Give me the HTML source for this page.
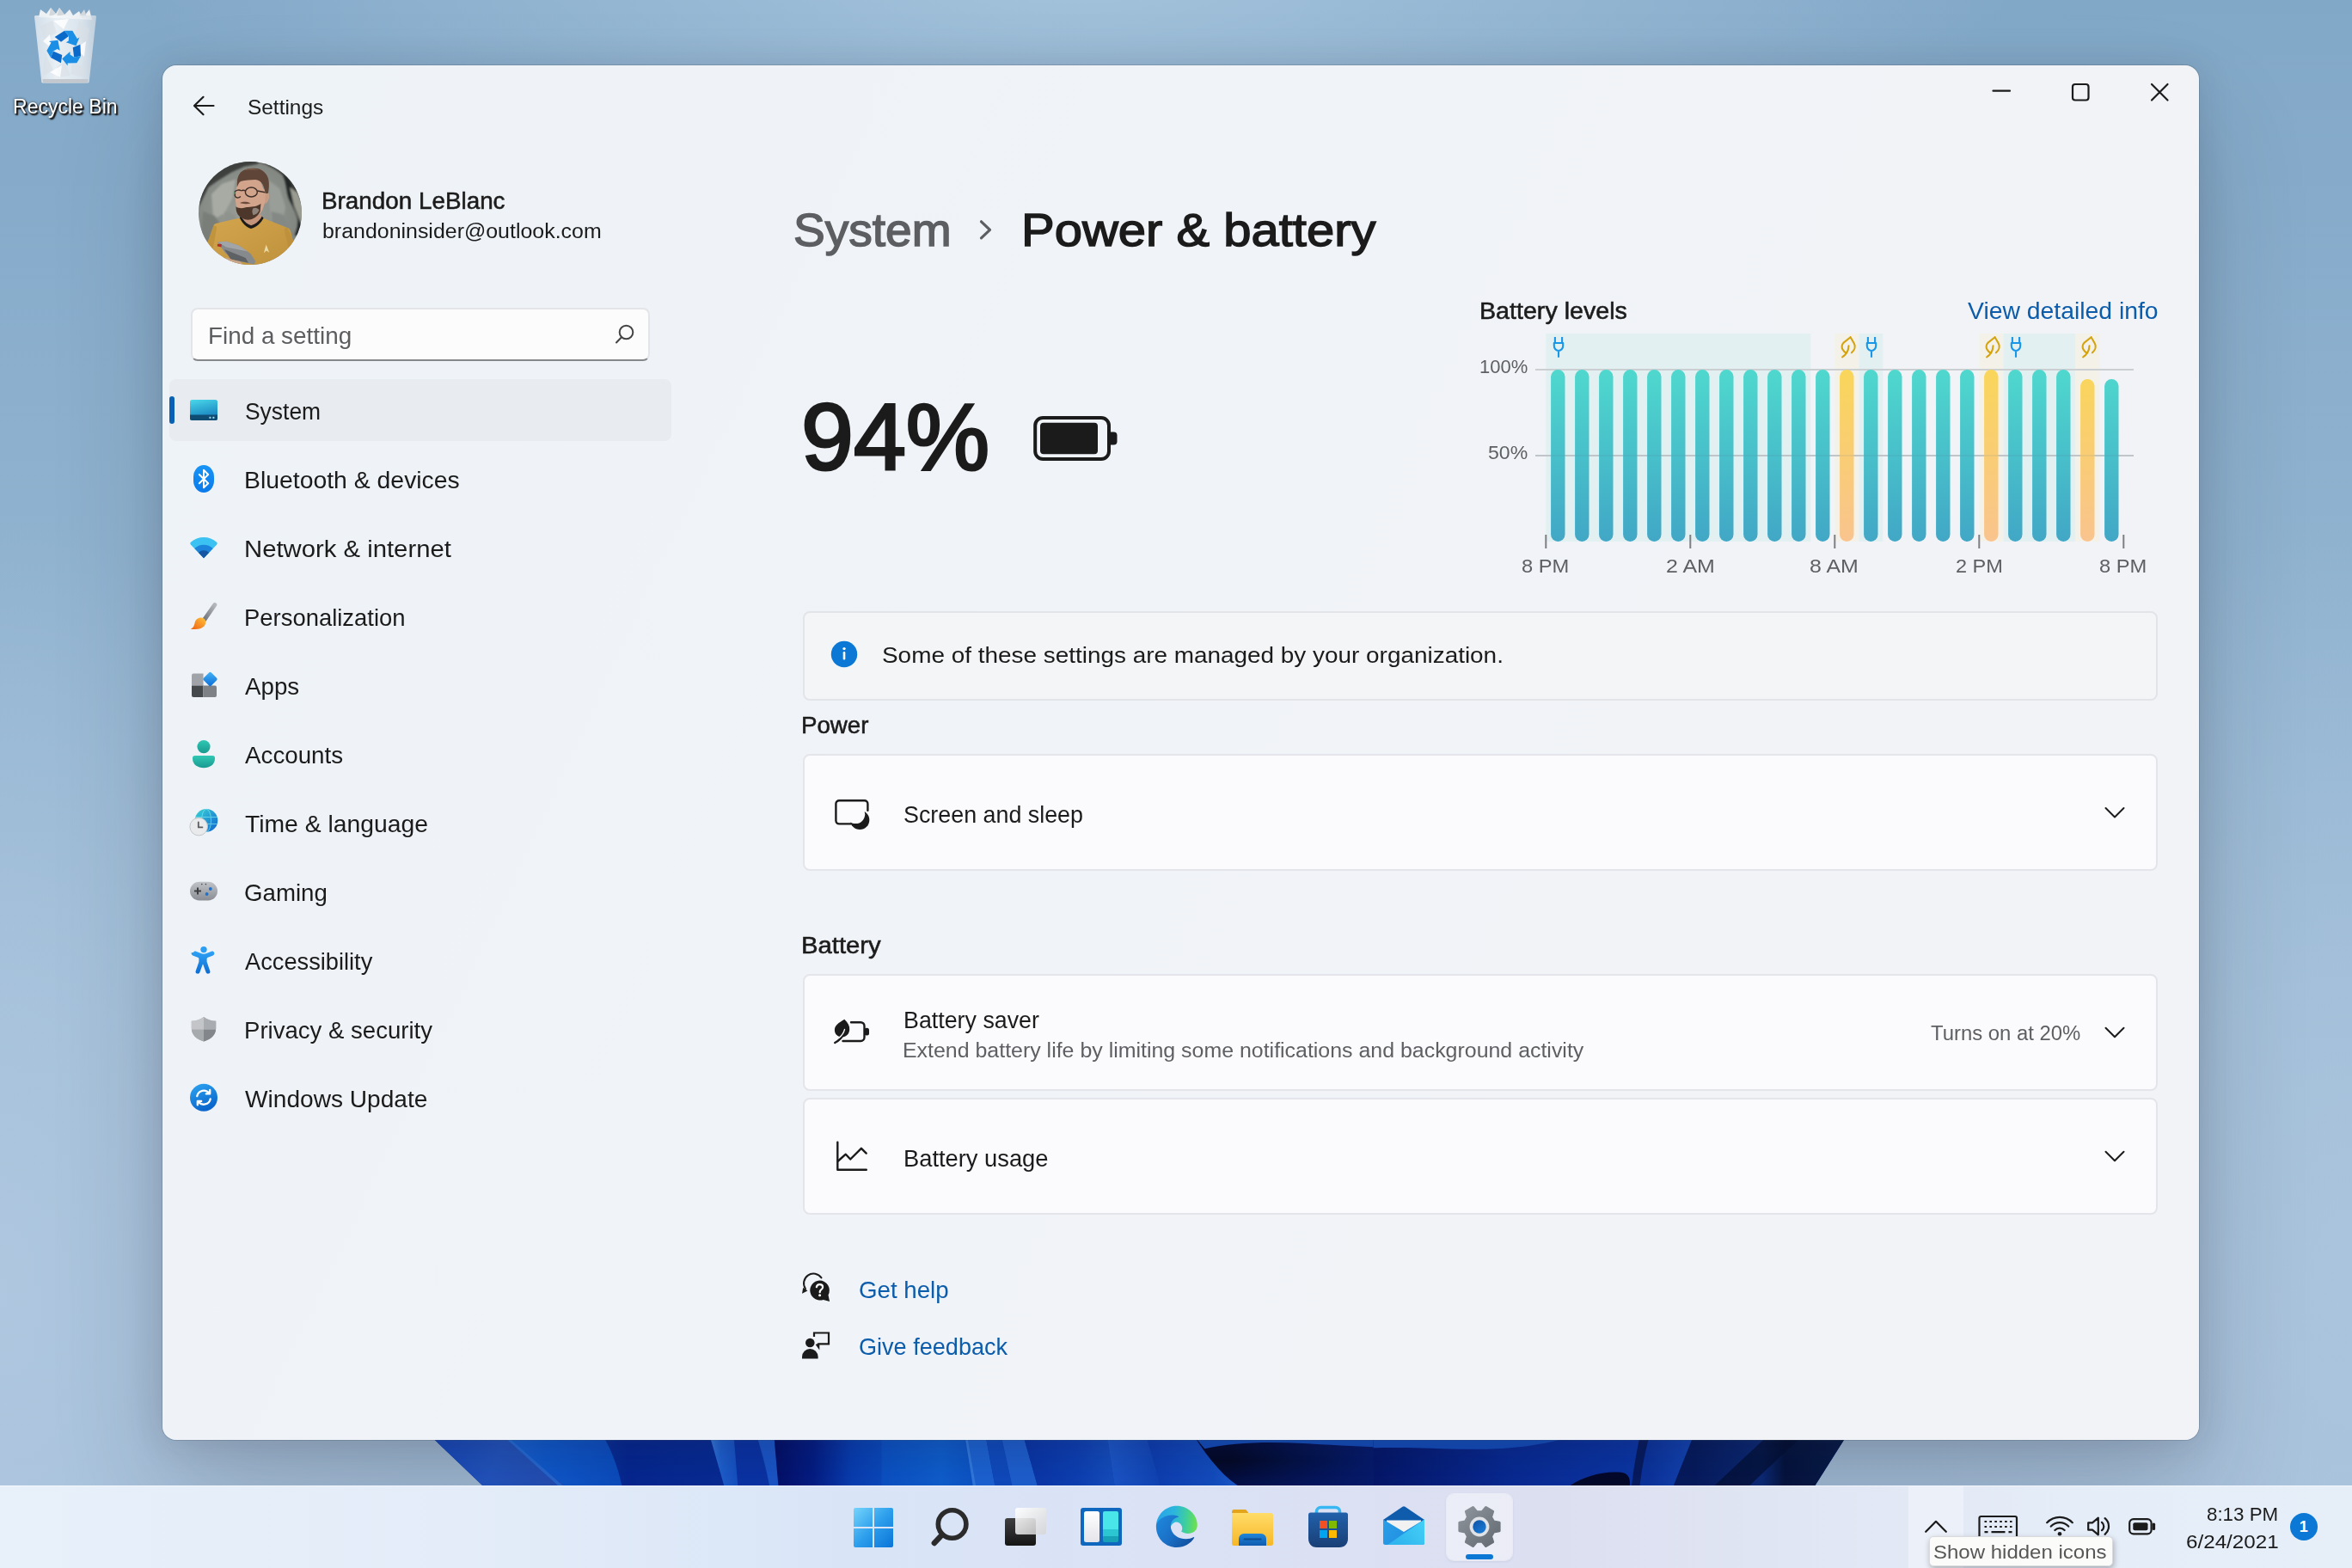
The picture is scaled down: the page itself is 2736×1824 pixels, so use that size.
<!DOCTYPE html>
<html lang="en">
<head>
<meta charset="utf-8">
<title>Settings - Power &amp; battery</title>
<style>
*{box-sizing:border-box;margin:0;padding:0}
html,body{width:2736px;height:1824px;overflow:hidden}
body{position:relative;font-family:"Liberation Sans",sans-serif;color:#1b1b1b;
background:
 radial-gradient(ellipse 1100px 420px at 1250px -60px, rgba(168,198,222,.95), rgba(168,198,222,0) 100%),
 radial-gradient(ellipse 500px 900px at 2736px 1500px, rgba(176,200,224,.65), rgba(176,200,224,0) 100%),
 radial-gradient(ellipse 500px 900px at 0px 1500px, rgba(176,200,224,.9), rgba(176,200,224,0) 100%),
 linear-gradient(180deg,#82a8c8 0%,#8fb2cf 35%,#9dbbd6 65%,#a6bfda 100%);}
.abs{position:absolute}
.t{position:absolute;white-space:nowrap;line-height:1;transform-origin:0 0;left:calc(var(--x)*1px);top:calc((var(--b) - var(--s)*0.845)*1px);font-size:calc(var(--s)*1px)}
.sb{-webkit-text-stroke:calc(var(--s)*0.02px) currentColor}
.sbh{-webkit-text-stroke:calc(var(--s)*0.028px) currentColor}
.sec{color:#5d5f62}
.lnk{color:#0b5cab}
svg{position:absolute;overflow:visible}
#win{left:189px;top:76px;width:2369px;height:1599px;border-radius:16px;
 background:linear-gradient(115deg,#eef3f7 0%,#f0f3f7 40%,#f1f3f7 70%,#f2f3f7 100%);
 box-shadow:0 0 0 1px rgba(70,85,100,.26),0 64px 128px rgba(25,30,40,.19),0 4px 42px rgba(25,30,40,.14)}
.card{position:absolute;left:933.500px;width:1576px;border:2px solid #e3e5ea;border-radius:8px;background:#fbfbfd}
#tb{left:0;top:1728px;width:2736px;height:96px;
 background:linear-gradient(90deg,#e8f0fa 0%,#e3ecf8 20%,#d9e5f7 36%,#dbe2f5 50%,#dcdff0 66%,#e1e7f4 78%,#e5edf8 88%,#e6eef8 100%);
 border-top:1px solid rgba(255,255,255,.55)}
#r_lab{left:14.74px;top:113px;transform:scaleX(0.9802)}
#t_settings{left:288.48px;top:113px;transform:scaleX(1.0176)}
#t_name{left:374.48px;top:220px;transform:scaleX(1.0120)}
#t_mail{left:375.44px;top:258px;transform:scaleX(1.0609)}
#t_find{left:242.48px;top:377px;transform:scaleX(1.0123)}
#n0{left:284.54px;top:465px;transform:scaleX(0.9607)}
#n1{left:283.94px;top:545px;transform:scaleX(1.0317)}
#n2{left:283.87px;top:625px;transform:scaleX(1.0647)}
#n3{left:284.01px;top:705px;transform:scaleX(0.9973)}
#n4{left:285.00px;top:785px;transform:scaleX(1.0081)}
#n5{left:285.00px;top:865px;transform:scaleX(1.0089)}
#n6{left:285.00px;top:945px;transform:scaleX(1.0291)}
#n7{left:284.49px;top:1025px;transform:scaleX(1.0053)}
#n8{left:285.00px;top:1105px;transform:scaleX(0.9900)}
#n9{left:284.00px;top:1185px;transform:scaleX(1.0023)}
#n10{left:285.00px;top:1265px;transform:scaleX(1.0217)}
#h_sys{left:922.94px;top:241px;transform:scaleX(1.0289)}
#h_pb{left:1188.16px;top:241px;transform:scaleX(1.0838)}
#h_pct{left:932.48px;top:454px;transform:scaleX(1.0048)}
#c_title{left:1720.92px;top:348px;transform:scaleX(1.0414)}
#c_link{left:2288.50px;top:348px;transform:scaleX(1.0304)}
#c_y1{left:1721.04px;top:415px;transform:scaleX(0.9649)}
#c_y2{left:1731.49px;top:515px;transform:scaleX(1.0114)}
#c_x0{left:1769.96px;top:647px;transform:scaleX(1.0392)}
#c_x1{left:1937.61px;top:647px;transform:scaleX(1.0940)}
#c_x2{left:2105.21px;top:647px;transform:scaleX(1.0940)}
#c_x3{left:2274.57px;top:647px;transform:scaleX(1.0314)}
#c_x4{left:2441.96px;top:647px;transform:scaleX(1.0392)}
#i_msg{left:1026.44px;top:749px;transform:scaleX(1.0612)}
#s_power{left:932.49px;top:830px;transform:scaleX(1.0066)}
#p_scr{left:1051.02px;top:934px;transform:scaleX(0.9764)}
#s_batt{left:932.37px;top:1086px;transform:scaleX(1.0647)}
#b_sav{left:1050.55px;top:1173px;transform:scaleX(0.9750)}
#b_desc{left:1050.38px;top:1211px;transform:scaleX(1.0604)}
#b_turn{left:2245.50px;top:1191px;transform:scaleX(1.0158)}
#b_use{left:1050.51px;top:1334px;transform:scaleX(0.9928)}
#l_help{left:998.99px;top:1487px;transform:scaleX(1.0069)}
#l_feed{left:999.02px;top:1553px;transform:scaleX(0.9846)}
#y_time{left:2567.01px;top:1751px;transform:scaleX(0.9878)}
#y_date{left:2542.93px;top:1783px;transform:scaleX(1.0707)}
#y_tip{left:2248.93px;top:1795px;transform:scaleX(1.0722)}
</style>
</head>
<body>
<!-- ===== desktop ===== -->
<div id="desk" class="abs" style="left:0;top:0;width:2736px;height:1824px">
<!-- recycle bin -->
<svg style="left:36px;top:4px" width="82" height="98" viewBox="36 4 82 98">
<defs><linearGradient id="rb_b" x1="40" y1="0" x2="112" y2="0" gradientUnits="userSpaceOnUse"><stop offset="0" stop-color="#e2e9f0" stop-opacity=".82"/><stop offset=".35" stop-color="#f6f9fb" stop-opacity=".88"/><stop offset=".75" stop-color="#eaeff3" stop-opacity=".84"/><stop offset="1" stop-color="#d0d9e2" stop-opacity=".8"/></linearGradient></defs>
<path d="M45 20l2-9 7 5 5-7 6 7 4-7 6 8 6-6 4 7 7-5 4 8 8-10 3 12z" fill="#eef1f4"/>
<path d="M59 9l6 7-8 4zM69 9l6 8-9 2zM98 11l3 9-9-1z" fill="#d3d8dd"/>
<path d="M40 19.500c0-1 .8-1.500 1.800-1.500h68.400c1 0 1.800.5 1.800 1.500l-8.300 75.500c-.1 1-.8 1.500-1.700 1.500H50c-.9 0-1.600-.5-1.700-1.500z" fill="url(#rb_b)"/>
<path d="M49.300 92h53.400l-.5 3c-.1 1-.8 1.500-1.700 1.500H51.500c-.9 0-1.600-.5-1.700-1.500z" fill="#c2c8ce"/>
<g fill="#d9dee3" opacity=".55"><path d="M47 30l14-6 5 14-15 8zM92 24l12 10-4 18-12-12zM52 60l10 22-12 6zM84 74l16 4-2 12-16-4zM66 78l10-6 6 16-14 2z"/></g>
<g fill="#ffffff" opacity=".8"><path d="M62 24l18-2-6 12zM50 48l8-8 2 16zM88 56l12-8-2 18zM58 84l14-8-2 14z"/></g>
<g transform="translate(76 56)">
<g id="rarrow"><path d="M-12.300-13L-1-20.200L4-14L-5-7.200z" fill="#0a69c9"/><path d="M-1-20.200H8.300L13.800-11l2.600-1.600L12.400-2.800L0.800-6.800l3-1.800L4-14z" fill="#1b8fe6"/></g>
<use href="#rarrow" transform="rotate(120)"/><use href="#rarrow" transform="rotate(240)"/>
</g></svg>
<span class="t" id="r_lab" style="--x:16.700;--b:131.500;--s:23.500;--w:118.600;color:#fff;text-shadow:1.500px 1.500px 2px rgba(0,0,0,.95),0 0 3px rgba(0,0,0,.7),2px 2px 1px rgba(60,30,0,.55)">Recycle Bin</span>

</div>
<!-- wallpaper bloom (peeks out below the window) -->
<svg style="left:480px;top:1660px" width="1700" height="70" viewBox="480 1660 1700 70">
<defs>
<clipPath id="blc"><path d="M490 1660L561.200 1728H2111.500L2154.500 1660z"/></clipPath>
<linearGradient id="b_a" x1="100" y1="20" x2="700" y2="242" gradientUnits="userSpaceOnUse"><stop offset="0" stop-color="#1548c2"/><stop offset=".5" stop-color="#2257c8"/><stop offset="1" stop-color="#2450bc"/></linearGradient>
<linearGradient id="b_b" x1="460" y1="0" x2="1020" y2="0" gradientUnits="userSpaceOnUse"><stop offset="0" stop-color="#1866de"/><stop offset=".35" stop-color="#0e5cd8"/><stop offset="1" stop-color="#0a4fcb"/></linearGradient>
<linearGradient id="b_c" x1="930" y1="0" x2="1520" y2="0" gradientUnits="userSpaceOnUse"><stop offset="0" stop-color="#06309f"/><stop offset=".2" stop-color="#04279a"/><stop offset="1" stop-color="#052c9e"/></linearGradient>
<linearGradient id="b_d" x1="1450" y1="0" x2="1590" y2="0" gradientUnits="userSpaceOnUse"><stop offset="0" stop-color="#3a82ee"/><stop offset=".4" stop-color="#1e64dc"/><stop offset="1" stop-color="#1454d0"/></linearGradient>
<linearGradient id="b_g" x1="1765" y1="0" x2="2400" y2="0" gradientUnits="userSpaceOnUse"><stop offset="0" stop-color="#010d6c"/><stop offset=".3" stop-color="#021c8c"/><stop offset=".6" stop-color="#0640be"/><stop offset="1" stop-color="#0a55d2"/></linearGradient>
<linearGradient id="b_g2" x1="-60" y1="0" x2="390" y2="0" gradientUnits="userSpaceOnUse"><stop offset="0" stop-color="#0a55d2"/><stop offset=".65" stop-color="#0d63dc"/><stop offset="1" stop-color="#0b58d4"/></linearGradient><linearGradient id="b_nx" x1="1650" y1="0" x2="2352" y2="0" gradientUnits="userSpaceOnUse"><stop offset="0" stop-color="#041a74" stop-opacity="0"/><stop offset="1" stop-color="#041a74" stop-opacity="1"/></linearGradient><linearGradient id="b_k" x1="630" y1="0" x2="1075" y2="0" gradientUnits="userSpaceOnUse"><stop offset="0" stop-color="#0836b2"/><stop offset=".6" stop-color="#0c42c0"/><stop offset="1" stop-color="#1452cc"/></linearGradient>
<linearGradient id="b_l" x1="1040" y1="0" x2="1300" y2="0" gradientUnits="userSpaceOnUse"><stop offset="0" stop-color="#1c5cd8"/><stop offset="1" stop-color="#0f46c2"/></linearGradient>
<linearGradient id="b_m" x1="1225" y1="0" x2="1700" y2="0" gradientUnits="userSpaceOnUse"><stop offset="0" stop-color="#0b3ebc"/><stop offset=".7" stop-color="#1250cc"/><stop offset="1" stop-color="#1e62dc"/></linearGradient>
<linearGradient id="b_n" x1="0" y1="20" x2="0" y2="242" gradientUnits="userSpaceOnUse"><stop offset="0" stop-color="#010a3c"/><stop offset=".45" stop-color="#000726"/><stop offset="1" stop-color="#020f4c"/></linearGradient>
<linearGradient id="b_p" x1="0" y1="0" x2="1300" y2="0" gradientUnits="userSpaceOnUse"><stop offset="0" stop-color="#031670"/><stop offset=".5" stop-color="#062a9c"/><stop offset="1" stop-color="#0a38b2"/></linearGradient>
<linearGradient id="b_q" x1="1330" y1="0" x2="1560" y2="0" gradientUnits="userSpaceOnUse"><stop offset="0" stop-color="#0a34a6"/><stop offset="1" stop-color="#1248c0"/></linearGradient>
<linearGradient id="b_r" x1="1560" y1="0" x2="2290" y2="0" gradientUnits="userSpaceOnUse"><stop offset="0" stop-color="#041a62"/><stop offset=".45" stop-color="#0a2a7c"/><stop offset=".6" stop-color="#03123f"/><stop offset="1" stop-color="#061a4a"/></linearGradient>
</defs>
<g clip-path="url(#blc)">
<rect x="480" y="1660" width="1700" height="70" fill="#0a3ab2"/>
<g transform="translate(480 1670) scale(.2381)">
<path d="M0-40H400L790 260H0z" fill="url(#b_a)"/>
<path d="M390-40L760 260H1040C1020 150 980 60 910-40z" fill="url(#b_b)"/>
<path d="M396-40l16 0 340 300h-24z" fill="#2a78e8" opacity=".7"/>
<path d="M905-40c60 90 100 190 120 300H1540L1440-40z" fill="url(#b_c)"/>
<path d="M1440-40L1526 260h70L1566-40z" fill="url(#b_d)"/>
<path d="M1566-40l24 300h156L1670-40z" fill="#0834b0"/>
<path d="M1670-40c30 100 60 200 76 300h46L1762-40z" fill="#1a5ad6"/>
<path d="M1762-40l26 300H2400V-40z" fill="url(#b_g)"/>
</g>
<g transform="translate(1040 1670) scale(.2381)">
<path d="M-60-40H345L392 260H-60z" fill="url(#b_g2)"/>
<path d="M340-40l48 300h108L440-40z" fill="#1c68e2"/>
<path d="M340-40l48 300h14L350-40z" fill="#3a86f0" opacity=".8"/>
<path d="M440-40l56 300h84L515-40z" fill="#0e4ecb"/>
<path d="M515-40l65 300h125L620-40z" fill="#1e64de"/>
<path d="M620-40l85 300h375L1035-40z" fill="url(#b_k)"/>
<path d="M1035-40l45 300h225C1280 160 1250 60 1220-40z" fill="url(#b_l)"/>
<path d="M1220-40c30 100 60 200 85 300h400C1600 200 1520 90 1440-40z" fill="url(#b_m)"/>
<path d="M1440-40c80 130 160 240 265 300H2400V-40z" fill="url(#b_n)"/>
<path d="M1440-40H2400V260H1705C1600 200 1520 90 1440-40z" fill="url(#b_nx)"/><path d="M1440-40c24 36 50 74 78 104 130-30 300-36 480-26 150 8 290 16 410 20V-40z" fill="#1250c8"/>

</g>
<g transform="translate(1600 1670) scale(.2381)">
<path d="M-10-40H1320L1290 260H-10z" fill="url(#b_p)"/>
<path d="M-10-40H1060C900 40 700 70 420 66 250 62 100 56-10 60z" fill="#1250c8"/>
<path d="M930 260c60-50 170-90 270-80 40 4 50 40 40 80z" fill="#00062a"/>
<path d="M1300-40c-20 100-40 200-50 300h200L1570-40z" fill="url(#b_q)"/>
<path d="M1300-40c-20 100-40 200-50 300h40c10-100 30-200 60-300z" fill="#041454" opacity=".8"/>
<path d="M1570-40L1450 260H2400V-40z" fill="url(#b_r)"/>
<path d="M1960-40L1640 260h170L2130-40z" fill="#020d33" opacity=".7"/>
</g>
</g></svg>

<!-- ===== window ===== -->
<div id="win" class="abs"></div>
<!-- title bar -->
<svg style="left:220px;top:108px" width="34" height="30" viewBox="220 108 34 30" fill="none" stroke="#1b1b1b" stroke-width="2.2" stroke-linecap="round" stroke-linejoin="round"><path d="M248.5 123H226.5M236.5 112.8L226 123l10.5 10.2"/></svg>
<span class="t" id="t_settings" style="--x:289.5;--b:133.2;--s:24;--w:86.5">Settings</span>
<svg style="left:2300px;top:90px" width="240" height="36" viewBox="2300 90 240 36" fill="none" stroke="#1b1b1b" stroke-width="2.2" stroke-linecap="round"><path d="M2318.5 105.7h19.5"/><rect x="2411" y="98" width="18.5" height="18.5" rx="3"/><path d="M2503 98l18.5 18.5M2521.5 98L2503 116.5"/></svg>
<!-- profile -->
<svg style="left:231px;top:188px" width="120" height="120" viewBox="231 188 120 120">
<defs><clipPath id="avc"><circle cx="291" cy="248" r="60"/></clipPath>
<linearGradient id="avsh" x1="0" y1="0" x2="1" y2="1"><stop offset="0" stop-color="#d3a64e"/><stop offset="1" stop-color="#bd8f3a"/></linearGradient>
<radialGradient id="avrk" cx=".45" cy=".5" r=".6"><stop offset="0" stop-color="#9a9e98"/><stop offset="1" stop-color="#7d817c"/></radialGradient>
<filter id="avbl" x="-20%" y="-20%" width="140%" height="140%"><feGaussianBlur stdDeviation="14"/></filter></defs>
<g clip-path="url(#avc)"><g transform="translate(226 183) scale(.08292)">
<rect x="0" y="0" width="1568" height="1568" fill="url(#avrk)"/>
<g filter="url(#avbl)">
<path d="M0 0H1000L880 95 700 130 520 210 330 330 200 420 60 700 0 900z" fill="#3d413e"/>
<path d="M880 60l120 40 130 70 110 80 60 110 20 140 60 130 100 150 40 180-60 160 110 60V0H880z" fill="#3a3d3a"/>
<path d="M1230 230c50 90 60 200 80 300 20 90 110 200 140 330 10 80-10 160-40 230l80 30c40-110 40-260-20-380-40-100-80-200-100-320-20-90-70-150-140-190z" fill="#242725"/>
<path d="M1340 420l110 80 90 220-20 260-120-300z" fill="#9a9c92"/>
<path d="M240 520l150-150 190-60-40 260-120 220-150 80z" fill="#a7aba4"/>
<path d="M120 760l170 60 120 200-140 160-190 60z" fill="#7a7e79"/>
<path d="M1040 320l160 120 80 260-60 280-140-60-30-300z" fill="#9a9e99"/>
<path d="M1080 760l160 40 120 200-60 160-200-120z" fill="#858985"/>
<path d="M420 760l140 40 60 130-180 60z" fill="#8f938d"/>
</g>
<path d="M190 1185L268 965c8-22 22-32 44-38l300-72 170 30 190-30 330 130c30 12 42 28 50 52l40 150 50 420H120z" fill="url(#avsh)"/>
<path d="M268 965c30-8 50 4 46 30l-60 330-64-140z" fill="#b88a36" opacity=".6"/>
<path d="M1302 985c-28-4-44 12-38 40l70 300 60-150z" fill="#b88a36" opacity=".55"/>
<path d="M636 845l20-20 140 60 150-60 26 24c-30 70-100 130-176 152-70-24-130-80-160-156z" fill="#1e1c1b"/>
<path d="M668 800l130 40 140-40 10 30c-30 60-90 110-150 126-56-18-106-60-136-122z" fill="#c4947b"/>
<path d="M598 330c20-40 300-60 330 0l40 110 50 30c26 10 34 60 26 110-8 40-30 70-56 64l-30 90c-30 70-110 130-190 130-90 0-160-60-176-150l-16-130z" fill="#d2a48b"/>
<path d="M1000 470c30-4 46 40 40 100-6 46-26 76-50 74z" fill="#c99a82"/>
<path d="M584 690c40 30 100 30 150 10 60-10 130 0 200-50l-10 110c-30 70-100 116-170 116-80 0-150-50-166-130z" fill="#4d372b"/>
<path d="M640 640c40-22 110-22 150 4-40 12-110 14-150-4z" fill="#6a4a3c"/>
<path d="M820 720c30-20 70-10 90 20-10 40-50 70-84 70-16-30-16-60-6-90z" fill="#9a8f88" opacity=".85"/>
<path d="M600 420c-6-80 6-160 50-210 50-50 140-66 230-52 80 14 140 70 160 150 14 60 8 150-6 200l-36 0c-10-50-20-90-40-130-20-40-60-60-100-64-70 0-140 10-200 20-30 10-44 50-58 86z" fill="#5f4537"/>
<path d="M700 180c60-30 150-30 210 0-60-6-150 0-210 0z" fill="#7a5a48"/>
<g fill="none" stroke="#3e2f29" stroke-width="17"><ellipse cx="800" cy="488" rx="84" ry="66"/><path d="M716 470c-20-10-40-10-56 0"/><path d="M660 470c-30-20-70-10-90 10v60c10 30 50 40 80 10"/><path d="M884 470l110 22"/></g>
<path d="M568 480v40" stroke="#4fbf7a" stroke-width="14" fill="none" opacity=".7"/>
<path d="M330 1190l120-10 180 60 160 110 70 110-20 40-260-50-150-110z" fill="#878a8d"/>
<path d="M330 1190l120-10 180 60 120 80-300-60z" fill="#a2a5a8"/>
<path d="M420 1290l300 120 40 70-250-50z" fill="#5f6265"/>
<path d="M325 1215l60 4-6 40-56-10z" fill="#b0302c"/>
<path d="M440 1400c40 20 110 50 200 60l40 40-200-20z" fill="#caa58c"/>
<path d="M1008 1225l44 110-40-26-36 34z" fill="#eadba6"/>
</g></g></svg>
<span class="t sb" id="t_name" style="--x:376.5;--b:243.4;--s:27.5;--w:211.5">Brandon LeBlanc</span>
<span class="t" id="t_mail" style="--x:376.5;--b:277;--s:23.5;--w:322.5">brandoninsider@outlook.com</span>
<!-- search box -->
<div class="abs" style="left:222px;top:358px;width:534px;height:62px;border-radius:8px;background:#fcfcfd;border:2px solid #e3e5e8;border-bottom:2px solid #868789"></div>
<span class="t" id="t_find" style="--x:244.5;--b:400;--s:27.5;--w:164;color:#5c5d5f">Find a setting</span>
<svg style="left:714px;top:376px" width="26" height="26" viewBox="714 376 26 26" fill="none" stroke="#444" stroke-width="2" stroke-linecap="round"><circle cx="728.500" cy="386.500" r="7.800"/><path d="M722.800 392.500L717 398.500"/></svg>
<!-- navigation -->
<div class="abs" style="left:197px;top:441px;width:584px;height:72px;border-radius:8px;background:#e8ebef"></div>
<div class="abs" style="left:197px;top:461px;width:6px;height:32px;border-radius:3px;background:#0a60b4"></div>
<svg style="left:215px;top:455px" width="44" height="850" viewBox="215 455 44 850">
<defs>
<linearGradient id="g_sys" x1="0" y1="0" x2="0.300" y2="1"><stop offset="0" stop-color="#4ad8ea"/><stop offset="1" stop-color="#1680be"/></linearGradient>
<linearGradient id="g_bt" x1="0" y1="0" x2="0" y2="1"><stop offset="0" stop-color="#1794f6"/><stop offset="1" stop-color="#0a7aea"/></linearGradient>
<linearGradient id="g_br" x1="1" y1="0" x2="0" y2="1"><stop offset="0" stop-color="#ffc23a"/><stop offset="1" stop-color="#ee5f12"/></linearGradient>
<linearGradient id="g_hd" x1="1" y1="0" x2="0" y2="1"><stop offset="0" stop-color="#b4b8bd"/><stop offset="1" stop-color="#74787e"/></linearGradient>
<linearGradient id="g_dm" x1="0" y1="0" x2="1" y2="1"><stop offset="0" stop-color="#45b4f6"/><stop offset="1" stop-color="#0a6cd8"/></linearGradient>
<linearGradient id="g_ac" x1="0" y1="0" x2="0" y2="1"><stop offset="0" stop-color="#30c8b4"/><stop offset="1" stop-color="#189a90"/></linearGradient>
<linearGradient id="g_gl" x1="0" y1="0" x2="1" y2="1"><stop offset="0" stop-color="#3ad6d6"/><stop offset="1" stop-color="#0f62d0"/></linearGradient>
<linearGradient id="g_gm" x1="0" y1="0" x2="0" y2="1"><stop offset="0" stop-color="#c0c4c9"/><stop offset="1" stop-color="#8a8e94"/></linearGradient>
<linearGradient id="g_ax" x1="0" y1="0" x2="0" y2="1"><stop offset="0" stop-color="#2ea2f6"/><stop offset="1" stop-color="#0d6cd2"/></linearGradient>
<linearGradient id="g_wu" x1="0" y1="0" x2="0.400" y2="1"><stop offset="0" stop-color="#2ea6f2"/><stop offset="1" stop-color="#0a66cc"/></linearGradient>
</defs>
<!-- system -->
<rect x="221" y="465" width="32" height="24" rx="2.500" fill="url(#g_sys)"/>
<path d="M221 482.500h32v4a2.500 2.500 0 0 1-2.500 2.500h-27a2.500 2.500 0 0 1-2.500-2.500z" fill="#0e4c74"/>
<rect x="243.400" y="484.800" width="2" height="2" fill="#9fdcee"/><rect x="247.400" y="484.800" width="2" height="2" fill="#9fdcee"/>
<!-- bluetooth -->
<rect x="225" y="541" width="24" height="32" rx="12" ry="14" fill="url(#g_bt)"/>
<path d="M231.800 552L242.200 562.200L237 567.200V546.800L242.200 552L231.800 562.200" fill="none" stroke="#fff" stroke-width="2" stroke-linejoin="round" stroke-linecap="round"/>
<!-- network -->
<path d="M237 649.200L221.800 633.400a1.800 1.800 0 0 1 .1-2.600A22.600 22.600 0 0 1 252.100 630.800a1.800 1.800 0 0 1 .1 2.600z" fill="#3cc2f2"/>
<path d="M237 649.200L226.300 638A15.500 15.500 0 0 1 247.700 638z" fill="#1c84da"/>
<path d="M237 649.200L230.900 642.800A8.800 8.800 0 0 1 243.100 642.800z" fill="#1555a2"/>
<!-- personalization -->
<path d="M249.800 703.600L238 720.500" stroke="url(#g_hd)" stroke-width="5" stroke-linecap="round" fill="none"/>
<path d="M239.200 722.600c1 4.400-3.400 9-9.400 9.200-3 .4-6.200.4-8 .1 3-1.800 4.200-4 4.700-7 .6-4 3.800-6.300 7.200-6.300 2.600 0 4.900 1.600 5.500 4z" fill="url(#g_br)"/>
<!-- apps -->
<path d="M223 785.500a2 2 0 0 1 2-2h11.500v14H223z" fill="#a0a3a7"/>
<path d="M223 797.500h13.500V811H225a2 2 0 0 1-2-2z" fill="#46494c"/>
<path d="M236.500 797.500H250a2 2 0 0 1 2 2V809a2 2 0 0 1-2 2h-13.500z" fill="#7e8186"/>
<rect x="238.300" y="783.800" width="12.400" height="12.400" rx="1.600" transform="rotate(45 244.500 790)" fill="url(#g_dm)"/>
<!-- accounts -->
<circle cx="237" cy="868.600" r="7.600" fill="url(#g_ac)"/>
<path d="M224 881.800a2.800 2.800 0 0 1 2.800-2.800h20.400a2.800 2.800 0 0 1 2.800 2.800v.8c0 7-6 10.600-13 10.600s-13-3.600-13-10.600z" fill="url(#g_ac)"/>
<!-- time & language -->
<circle cx="240" cy="954.400" r="13.300" fill="url(#g_gl)"/>
<g fill="none" stroke="#7fe6ee" stroke-width="1" opacity=".7"><ellipse cx="240" cy="954.400" rx="5.500" ry="13.300"/><path d="M227 950.500h26M227.500 958.500h25"/></g>
<circle cx="231.200" cy="961.600" r="10.300" fill="#e9eaeb" stroke="#c4c6c9" stroke-width="1"/>
<path d="M230.800 956.400v6h4.600" fill="none" stroke="#5a5c5f" stroke-width="1.800" stroke-linecap="round" stroke-linejoin="round"/>
<!-- gaming -->
<rect x="221" y="1025.800" width="32" height="21.600" rx="10.800" fill="url(#g_gm)"/>
<path d="M226 1036.500h8M230 1032.500v8" stroke="#3c3e41" stroke-width="2" fill="none"/>
<circle cx="244.800" cy="1034" r="1.900" fill="#1a73d4"/><circle cx="240.600" cy="1040" r="1.900" fill="#1a73d4"/>
<circle cx="234.800" cy="1028.600" r=".8" fill="#444"/><circle cx="239.400" cy="1028.600" r=".8" fill="#444"/>
<!-- accessibility -->
<circle cx="237" cy="1104.600" r="3.700" fill="#2b9ef4"/>
<path d="M224.800 1108.100c.5-1.300 2-1.900 3.300-1.400l6.400 2.500c1.600.6 3.400.6 5 0l6.400-2.500c1.300-.5 2.800.1 3.300 1.400s-.1 2.800-1.400 3.300l-5.900 2.300c-.8.300-1.300 1.100-1.300 1.900v2.400c0 .7.100 1.400.4 2l3.300 9.400c.5 1.300-.2 2.800-1.500 3.200s-2.800-.2-3.200-1.500l-3.400-9.300h-.4l-3.400 9.300c-.4 1.300-1.900 2-3.200 1.500s-2-1.900-1.500-3.200l3.300-9.400c.3-.6.400-1.300.4-2v-2.400c0-.8-.5-1.600-1.300-1.900l-5.900-2.300c-1.300-.5-1.900-2-1.400-3.300z" fill="url(#g_ax)"/>
<!-- privacy -->
<path d="M237 1183c4 3 9 4.600 14.200 4.800v8c0 8-5.600 13.200-14.200 15.600-8.600-2.400-14.200-7.600-14.200-15.600v-8c5.200-.2 10.200-1.800 14.200-4.800z" fill="#a6a9ad"/>
<path d="M237 1183c4 3 9 4.600 14.200 4.800v8c0 .7 0 1.400-.1 2H237z" fill="#a9acb0"/>
<path d="M237 1183c-4 3-9 4.600-14.200 4.800v8c0 .7 0 1.400.1 2H237z" fill="#c3c5c8"/>
<path d="M237 1197.800h14.100c-.8 6.900-6.100 11.400-14.100 13.600z" fill="#83868a"/>
<path d="M237 1197.800v13.600c-8-2.200-13.300-6.700-14.100-13.600z" fill="#a7aaad"/>
<!-- windows update -->
<circle cx="237" cy="1276.700" r="16" fill="url(#g_wu)"/>
<g fill="none" stroke="#fff" stroke-width="2.300" stroke-linecap="round" stroke-linejoin="round"><path d="M229.300 1275a7.900 7.900 0 0 1 14-3.200M244.200 1268v4.400h-4.400"/><path d="M244.700 1278.400a7.900 7.900 0 0 1-14 3.200M229.800 1285.400v-4.400h4.400"/></g>
</svg>
<span class="t" id="n0" style="--x:285.5;--b:488.5;--s:27.5;--w:85.5">System</span>
<span class="t" id="n1" style="--x:286;--b:568.5;--s:27.5;--w:247.600">Bluetooth &amp; devices</span>
<span class="t" id="n2" style="--x:286;--b:648.5;--s:27.5;--w:238.500">Network &amp; internet</span>
<span class="t" id="n3" style="--x:286;--b:728.5;--s:27.5;--w:184.500">Personalization</span>
<span class="t" id="n4" style="--x:285;--b:808.5;--s:27.5;--w:62.500">Apps</span>
<span class="t" id="n5" style="--x:285;--b:888.5;--s:27.5;--w:113">Accounts</span>
<span class="t" id="n6" style="--x:285;--b:968.5;--s:27.5;--w:212">Time &amp; language</span>
<span class="t" id="n7" style="--x:285.5;--b:1048.500;--s:27.5;--w:94.500">Gaming</span>
<span class="t" id="n8" style="--x:285;--b:1128.500;--s:27.5;--w:148.500">Accessibility</span>
<span class="t" id="n9" style="--x:286;--b:1208.500;--s:27.5;--w:217.500">Privacy &amp; security</span>
<span class="t" id="n10" style="--x:285;--b:1288.500;--s:27.5;--w:211.500">Windows Update</span>

<!-- breadcrumb header -->
<span class="t sbh sec" id="h_sys" style="--x:925;--b:286;--s:53.5;--w:178;color:#5c5e61">System</span>
<svg style="left:1136px;top:252px" width="22" height="30" viewBox="1136 252 22 30" fill="none" stroke="#5c5e61" stroke-width="3.200" stroke-linecap="round" stroke-linejoin="round"><path d="M1141.500 257.800l10 9.500-10 9.500"/></svg>
<span class="t sbh" id="h_pb" style="--x:1192.500;--b:286;--s:53.5;--w:407.500">Power &amp; battery</span>
<!-- percentage -->
<span class="t sbh" id="h_pct" style="--x:937.500;--b:545.500;--s:109;--w:211">94%</span>
<svg style="left:1200px;top:482px" width="104" height="58" viewBox="1200 482 104 58"><rect x="1204.200" y="486" width="85.800" height="48" rx="9" fill="none" stroke="#1b1b1b" stroke-width="4"/><rect x="1210" y="491.800" width="67" height="36.400" rx="4" fill="#1b1b1b"/><path d="M1292 502.500h3.500a4 4 0 0 1 4 4v7a4 4 0 0 1-4 4H1292z" fill="#1b1b1b"/></svg>

<!-- battery levels chart -->
<span class="t sb" id="c_title" style="--x:1723;--b:370.900;--s:27.5;--w:168.700">Battery levels</span>
<span class="t lnk" id="c_link" style="--x:2288.500;--b:370.900;--s:27.5;--w:220.500">View detailed info</span>
<svg style="left:1780px;top:384px" width="720" height="260" viewBox="1780 384 720 260">
<defs><linearGradient id="g_teal" x1="0" y1="430" x2="0" y2="630" gradientUnits="userSpaceOnUse"><stop offset="0" stop-color="#4fd8ce"/><stop offset="1" stop-color="#41a7c6"/></linearGradient><linearGradient id="g_yel" x1="0" y1="430" x2="0" y2="630" gradientUnits="userSpaceOnUse"><stop offset="0" stop-color="#f9d65a"/><stop offset="1" stop-color="#f9c48e"/></linearGradient></defs>
<rect x="1798.3" y="388" width="308.0" height="242" fill="#e2f0f2"/>
<rect x="2162.3" y="388" width="28.0" height="242" fill="#e2f0f2"/>
<rect x="2330.3" y="388" width="84.0" height="242" fill="#e2f0f2"/>
<rect x="2134.3" y="388" width="28.0" height="242" fill="#f4f2e8"/>
<rect x="2302.3" y="388" width="28.0" height="242" fill="#f4f2e8"/>
<rect x="2414.3" y="388" width="28.0" height="242" fill="#f4f2e8"/>
<path d="M1786 430H2482M1786 530H2482" stroke="#cccfd2" stroke-width="1.800" fill="none"/>
<rect x="1804.1" y="430" width="16.400" height="200" rx="8.200" fill="url(#g_teal)"/>
<rect x="1832.1" y="430" width="16.400" height="200" rx="8.200" fill="url(#g_teal)"/>
<rect x="1860.1" y="430" width="16.400" height="200" rx="8.200" fill="url(#g_teal)"/>
<rect x="1888.1" y="430" width="16.400" height="200" rx="8.200" fill="url(#g_teal)"/>
<rect x="1916.1" y="430" width="16.400" height="200" rx="8.200" fill="url(#g_teal)"/>
<rect x="1944.1" y="430" width="16.400" height="200" rx="8.200" fill="url(#g_teal)"/>
<rect x="1972.1" y="430" width="16.400" height="200" rx="8.200" fill="url(#g_teal)"/>
<rect x="2000.1" y="430" width="16.400" height="200" rx="8.200" fill="url(#g_teal)"/>
<rect x="2028.1" y="430" width="16.400" height="200" rx="8.200" fill="url(#g_teal)"/>
<rect x="2056.1" y="430" width="16.400" height="200" rx="8.200" fill="url(#g_teal)"/>
<rect x="2084.1" y="430" width="16.400" height="200" rx="8.200" fill="url(#g_teal)"/>
<rect x="2112.1" y="430" width="16.400" height="200" rx="8.200" fill="url(#g_teal)"/>
<rect x="2140.1" y="430" width="16.400" height="200" rx="8.200" fill="url(#g_yel)"/>
<rect x="2168.1" y="430" width="16.400" height="200" rx="8.200" fill="url(#g_teal)"/>
<rect x="2196.1" y="430" width="16.400" height="200" rx="8.200" fill="url(#g_teal)"/>
<rect x="2224.1" y="430" width="16.400" height="200" rx="8.200" fill="url(#g_teal)"/>
<rect x="2252.1" y="430" width="16.400" height="200" rx="8.200" fill="url(#g_teal)"/>
<rect x="2280.1" y="430" width="16.400" height="200" rx="8.200" fill="url(#g_teal)"/>
<rect x="2308.1" y="430" width="16.400" height="200" rx="8.200" fill="url(#g_yel)"/>
<rect x="2336.1" y="430" width="16.400" height="200" rx="8.200" fill="url(#g_teal)"/>
<rect x="2364.1" y="430" width="16.400" height="200" rx="8.200" fill="url(#g_teal)"/>
<rect x="2392.1" y="430" width="16.400" height="200" rx="8.200" fill="url(#g_teal)"/>
<rect x="2420.1" y="441" width="16.400" height="189" rx="8.200" fill="url(#g_yel)"/>
<rect x="2448.1" y="441" width="16.400" height="189" rx="8.200" fill="url(#g_teal)"/>
<path d="M1786 530H2482" stroke="#5a7a88" stroke-opacity=".10" stroke-width="2" fill="none"/>
<path d="M1798.3 622v16M1966.3 622v16M2134.3 622v16M2302.3 622v16M2470.3 622v16" stroke="#7d7f82" stroke-width="2" fill="none"/>
<path d="M1808.9 392v6.500M1817.1 392v6.500M1807.8 399h10.400v3.300a5.200 5.700 0 0 1-10.400 0zM1813.0 408.200v7.600" fill="none" stroke="#1896e8" stroke-width="2.100" stroke-linecap="butt" stroke-linejoin="round"/>
<path d="M2172.9 392v6.500M2181.1 392v6.500M2171.8 399h10.400v3.300a5.200 5.700 0 0 1-10.400 0zM2177.0 408.200v7.600" fill="none" stroke="#1896e8" stroke-width="2.100" stroke-linecap="butt" stroke-linejoin="round"/>
<path d="M2340.9 392v6.500M2349.1 392v6.500M2339.8 399h10.400v3.300a5.200 5.700 0 0 1-10.400 0zM2345.0 408.200v7.600" fill="none" stroke="#1896e8" stroke-width="2.100" stroke-linecap="butt" stroke-linejoin="round"/>
<path d="M2152.6 392.2L2144.3 398.9C2142.1 401.0 2142.3 404.6 2143.5 406.6C2144.5 408.5 2146.3 410.0 2147.9 410.9M2152.6 392.2L2156.8 399.5C2158.5 402.6 2157.9 407.0 2153.9 410.3M2150.5 402.2C2150.3 408.0 2147.3 412.6 2143.1 415.3" fill="none" stroke="#d4a30f" stroke-width="2.100" stroke-linecap="round" stroke-linejoin="round"/>
<path d="M2320.6 392.2L2312.3 398.9C2310.1 401.0 2310.3 404.6 2311.5 406.6C2312.5 408.5 2314.3 410.0 2315.9 410.9M2320.6 392.2L2324.8 399.5C2326.5 402.6 2325.9 407.0 2321.9 410.3M2318.5 402.2C2318.3 408.0 2315.3 412.6 2311.1 415.3" fill="none" stroke="#d4a30f" stroke-width="2.100" stroke-linecap="round" stroke-linejoin="round"/>
<path d="M2432.6 392.2L2424.3 398.9C2422.1 401.0 2422.3 404.6 2423.5 406.6C2424.5 408.5 2426.3 410.0 2427.9 410.9M2432.6 392.2L2436.8 399.5C2438.5 402.6 2437.9 407.0 2433.9 410.3M2430.5 402.2C2430.3 408.0 2427.3 412.6 2423.1 415.3" fill="none" stroke="#d4a30f" stroke-width="2.100" stroke-linecap="round" stroke-linejoin="round"/>
</svg>
<span class="t sec" id="c_y1" style="--x:1722;--b:434.500;--s:22.800;--w:55">100%</span>
<span class="t sec" id="c_y2" style="--x:1732.500;--b:534.500;--s:22.800;--w:44.500">50%</span>
<span class="t sec" id="c_x0" style="--x:1771.0;--b:666;--s:22.800;--w:53.0">8 PM</span>
<span class="t sec" id="c_x1" style="--x:1938.7;--b:666;--s:22.800;--w:54.7">2 AM</span>
<span class="t sec" id="c_x2" style="--x:2106.3;--b:666;--s:22.800;--w:54.7">8 AM</span>
<span class="t sec" id="c_x3" style="--x:2275.6;--b:666;--s:22.800;--w:52.6">2 PM</span>
<span class="t sec" id="c_x4" style="--x:2443.0;--b:666;--s:22.800;--w:53.0">8 PM</span>

<!-- info bar -->
<div class="card" style="top:710.500px;height:104.500px;background:#f4f5f7;border-color:#e2e4e8"></div>
<svg style="left:966px;top:745px" width="32" height="32" viewBox="966 745 32 32"><circle cx="982" cy="761" r="15.200" fill="#0a78d4"/><circle cx="982" cy="754.600" r="1.700" fill="#fff"/><rect x="980.700" y="758" width="2.600" height="9.500" rx="1.300" fill="#fff"/></svg>
<span class="t" id="i_msg" style="--x:1027.500;--b:770.700;--s:26.3;--w:719.500">Some of these settings are managed by your organization.</span>
<!-- power section -->
<span class="t sb" id="s_power" style="--x:934.500;--b:852.600;--s:27.5;--w:76.500">Power</span>
<div class="card" style="top:877px;height:136px"></div>
<svg style="left:968px;top:926px" width="48" height="44" viewBox="968 926 48 44"><defs><mask id="m_moon"><rect x="968" y="926" width="48" height="44" fill="#fff"/><circle cx="995.300" cy="947.200" r="10.900" fill="#000"/></mask></defs><path d="M989.800 958.400H976.200a3.800 3.800 0 0 1-3.800-3.800V935a3.800 3.800 0 0 1 3.800-3.800h29.400a3.800 3.800 0 0 1 3.800 3.800v7.700" fill="none" stroke="#1b1b1b" stroke-width="2.400" stroke-linecap="round"/><circle cx="1000.200" cy="953.900" r="11.100" fill="#1b1b1b" mask="url(#m_moon)"/></svg>
<span class="t" id="p_scr" style="--x:1052;--b:956.700;--s:27.5;--w:207">Screen and sleep</span>
<svg style="left:2446px;top:936px" width="28" height="18" viewBox="2446 936 28 18" fill="none" stroke="#1b1b1b" stroke-width="2" stroke-linecap="round" stroke-linejoin="round"><path d="M2449.500 940l10.500 10.500 10.500-10.500"/></svg>
<!-- battery section -->
<span class="t sb" id="s_batt" style="--x:934.500;--b:1109;--s:27.5;--w:90.500">Battery</span>
<div class="card" style="top:1133px;height:135.500px"></div>
<svg style="left:968px;top:1182px" width="48" height="36" viewBox="968 1182 48 36"><path d="M990 1189.200h11.300a4.200 4.200 0 0 1 4.200 4.200v13.400a4.200 4.200 0 0 1-4.200 4.200H980.500" fill="none" stroke="#1b1b1b" stroke-width="2.400" stroke-linecap="round"/><rect x="1005.500" y="1195.800" width="5.500" height="8.600" rx="2.500" fill="#1b1b1b"/><path d="M982.300 1185.800c4.200 3.800 6.300 8 5.900 12.200-.5 5.200-4 8.300-8.700 8.300-5 0-8.600-3.400-8.600-8.100 0-5.200 4.600-8.400 11.400-12.400z" fill="#1b1b1b"/><path d="M971.200 1213c4.600-2.300 8.400-6 10.500-11.200" fill="none" stroke="#1b1b1b" stroke-width="2.400" stroke-linecap="round"/><path d="M975.500 1207.500c3.600-2.600 6-6 7-10" fill="none" stroke="#fbfbfd" stroke-width="1.300" stroke-linecap="round"/></svg>
<span class="t" id="b_sav" style="--x:1052.500;--b:1196.500;--s:27.5;--w:156">Battery saver</span>
<span class="t sec" id="b_desc" style="--x:1052.500;--b:1230.200;--s:23.500;--w:790">Extend battery life by limiting some notifications and background activity</span>
<span class="t sec" id="b_turn" style="--x:2245.500;--b:1210;--s:23.500;--w:173.700">Turns on at 20%</span>
<svg style="left:2446px;top:1192px" width="28" height="18" viewBox="2446 1192 28 18" fill="none" stroke="#1b1b1b" stroke-width="2" stroke-linecap="round" stroke-linejoin="round"><path d="M2449.500 1195.800l10.500 10.500 10.500-10.500"/></svg>
<div class="card" style="top:1277.300px;height:135.700px"></div>
<svg style="left:970px;top:1324px" width="42" height="42" viewBox="970 1324 42 42" fill="none" stroke="#1b1b1b" stroke-width="2.400" stroke-linecap="round" stroke-linejoin="round"><path d="M974.300 1328.600V1360.800H1007.800"/><path d="M975 1350.500l8.800-7.800 5.400 5.800 12.700-12.700 5.800 5.800"/></svg>
<span class="t" id="b_use" style="--x:1052.500;--b:1356.600;--s:27.5;--w:165.800">Battery usage</span>
<svg style="left:2446px;top:1336px" width="28" height="18" viewBox="2446 1336 28 18" fill="none" stroke="#1b1b1b" stroke-width="2" stroke-linecap="round" stroke-linejoin="round"><path d="M2449.500 1339.800l10.500 10.500 10.500-10.500"/></svg>

<!-- help links -->
<svg style="left:930px;top:1480px" width="38" height="38" viewBox="930 1480 38 38"><path d="M953.200 1489.400a11.600 11.600 0 0 1 10.300 17l1.600 7.700-7.300-2.200a11.600 11.600 0 1 1-4.600-22.500z" fill="#1b1b1b"/><path d="M949.800 1497.200c.4-1.900 1.800-3 3.700-3 2.100 0 3.600 1.300 3.600 3.100 0 1.500-.8 2.300-2 3.100-1 .7-1.400 1.200-1.400 2.300v.5" fill="none" stroke="#fff" stroke-width="2.200" stroke-linecap="round" stroke-linejoin="round"/><circle cx="953.600" cy="1506.800" r="1.500" fill="#fff"/><path d="M955.500 1486.400a10.800 10.800 0 0 0-18.500 12.800" fill="none" stroke="#1b1b1b" stroke-width="2" stroke-linecap="round"/><path d="M933 1504.800l1.200-6.900 5.300 3.600z" fill="#1b1b1b"/></svg>
<span class="t lnk" id="l_help" style="--x:1000;--b:1510.400;--s:27.5;--w:102.700">Get help</span>
<svg style="left:930px;top:1546px" width="38" height="38" viewBox="930 1546 38 38"><circle cx="942.300" cy="1562" r="5.300" fill="#1b1b1b"/><path d="M933 1580.600v-2.400a9.300 9.300 0 0 1 18.600 0v2.400z" fill="#1b1b1b"/><path d="M947 1555v-4.500h17v12.800h-11.800v3.800l-2.500-3.500" fill="none" stroke="#1b1b1b" stroke-width="2.200" stroke-linejoin="miter"/></svg>
<span class="t lnk" id="l_feed" style="--x:1000;--b:1576.300;--s:27.5;--w:172.300">Give feedback</span>

<!-- ===== taskbar ===== -->
<div id="tb" class="abs"></div>
<!-- taskbar icons -->
<div class="abs" style="left:1683px;top:1738px;width:76px;height:77px;border-radius:8px;background:rgba(255,255,255,.42);box-shadow:0 0 0 1px rgba(255,255,255,.5),0 1px 3px rgba(60,80,120,.18)"></div>
<div class="abs" style="left:1705px;top:1808px;width:32px;height:6px;border-radius:3px;background:#0a78d4"></div>
<svg style="left:980px;top:1744px" width="790" height="64" viewBox="980 1744 790 64">
<defs>
<linearGradient id="k_st" x1="993" y1="1754" x2="1039" y2="1800" gradientUnits="userSpaceOnUse"><stop offset="0" stop-color="#76d4fb"/><stop offset=".5" stop-color="#2d9fec"/><stop offset="1" stop-color="#0a74d8"/></linearGradient>
<linearGradient id="k_tv1" x1="0" y1="0" x2="0" y2="1"><stop offset="0" stop-color="#404040"/><stop offset="1" stop-color="#151515"/></linearGradient>
<linearGradient id="k_tv2" x1="0" y1="0" x2="1" y2="1"><stop offset="0" stop-color="#ffffff" stop-opacity=".95"/><stop offset="1" stop-color="#d4d4d4" stop-opacity=".8"/></linearGradient>
<linearGradient id="k_wp" x1="0" y1="0" x2="0" y2="1"><stop offset="0" stop-color="#ffffff"/><stop offset="1" stop-color="#e4e4ea"/></linearGradient>
<linearGradient id="k_e1" x1="1348" y1="1768" x2="1392" y2="1772" gradientUnits="userSpaceOnUse"><stop offset="0" stop-color="#2aa5e6"/><stop offset=".4" stop-color="#2cb6dc"/><stop offset=".72" stop-color="#3fcf9c"/><stop offset="1" stop-color="#6ee04e"/></linearGradient>
<linearGradient id="k_e2" x1="1346" y1="1768" x2="1384" y2="1798" gradientUnits="userSpaceOnUse"><stop offset="0" stop-color="#1e86da"/><stop offset=".5" stop-color="#1a70c6"/><stop offset="1" stop-color="#114f9e"/></linearGradient>
<linearGradient id="k_fo" x1="0" y1="1760" x2="0" y2="1798" gradientUnits="userSpaceOnUse"><stop offset="0" stop-color="#ffdc68"/><stop offset="1" stop-color="#f7b728"/></linearGradient>
<linearGradient id="k_fp" x1="0" y1="1783" x2="0" y2="1798" gradientUnits="userSpaceOnUse"><stop offset="0" stop-color="#2289dc"/><stop offset="1" stop-color="#0f5cb0"/></linearGradient>
<linearGradient id="k_sb" x1="0" y1="1760" x2="0" y2="1800" gradientUnits="userSpaceOnUse"><stop offset="0" stop-color="#2160aa"/><stop offset="1" stop-color="#193f76"/></linearGradient>
<linearGradient id="k_ml" x1="1609" y1="1767" x2="1657" y2="1797" gradientUnits="userSpaceOnUse"><stop offset="0" stop-color="#2b9fe8"/><stop offset="1" stop-color="#1a86dc"/></linearGradient>
<linearGradient id="k_ml2" x1="1625" y1="1797" x2="1657" y2="1768" gradientUnits="userSpaceOnUse"><stop offset="0" stop-color="#2fb4ee"/><stop offset="1" stop-color="#46d0f6"/></linearGradient>
<linearGradient id="k_gr" x1="1700" y1="1753" x2="1742" y2="1799" gradientUnits="userSpaceOnUse"><stop offset="0" stop-color="#8f959c"/><stop offset="1" stop-color="#636970"/></linearGradient>
<linearGradient id="k_gc" x1="1714" y1="1768" x2="1728" y2="1784" gradientUnits="userSpaceOnUse"><stop offset="0" stop-color="#0d52a4"/><stop offset="1" stop-color="#1b80dc"/></linearGradient>
</defs>
<!-- start -->
<path d="M993 1756a2 2 0 0 1 2-2h20v22h-22zM1017 1754h20a2 2 0 0 1 2 2v20h-22zM993 1778h22v22h-20a2 2 0 0 1-2-2zM1017 1778h22v20a2 2 0 0 1-2 2h-20z" fill="url(#k_st)"/>
<!-- search -->
<circle cx="1107.600" cy="1773" r="16.300" fill="none" stroke="#2b2b2b" stroke-width="5.600"/>
<path d="M1096 1785.300L1086.800 1795" stroke="#2b2b2b" stroke-width="6.400" stroke-linecap="round" fill="none"/>
<!-- task view -->
<rect x="1169" y="1766" width="36" height="32" rx="3" fill="url(#k_tv1)"/>
<rect x="1181" y="1754" width="36" height="31" rx="3" fill="url(#k_tv2)"/>
<!-- widgets -->
<rect x="1257" y="1754" width="48" height="44" rx="3" fill="#1068be"/>
<rect x="1261" y="1758" width="18" height="36" rx="2.500" fill="url(#k_wp)"/>
<path d="M1283 1760a2 2 0 0 1 2-2h14a2 2 0 0 1 2 2v19h-18z" fill="#48e6e8"/>
<rect x="1283" y="1779" width="18" height="8" fill="#2cc6d2"/>
<path d="M1283 1787h18v5a2 2 0 0 1-2 2h-14a2 2 0 0 1-2-2z" fill="#18a2b8"/>
<!-- edge -->
<path d="M1344.900 1776c0-13.400 10.700-24.200 23.900-24.200 13.400 0 24 10.400 24 22 0 4.200-1.800 7-4.900 8.700-4.400 2.300-9.800 1.600-13.800-1 1.300-1.700 1.600-4.600.3-7.100-1.400-2.700-4.100-4.200-6.800-4-3.600 1-6.100 4.400-6.100 8.500z" fill="url(#k_e1)"/>
<path d="M1344.900 1776c0 13.300 10.700 24 23.900 24 8.800 0 16.300-4.300 20.500-11.200l-.8-.8c-4 2.400-9.800 3-15.600 1.200-6.400-2-10.900-7.300-11.100-14 0-4.100 2.400-7.800 6-9.500 1.300-.6 2.600-1 3.700-1.300-2.600-1.600-6-2.200-9.700-1.900-9 .8-16.900 7-16.900 13.500z" fill="url(#k_e2)"/>
<!-- file explorer -->
<path d="M1433 1758.500a2.500 2.500 0 0 1 2.500-2.500h12.400c1 0 1.900.5 2.500 1.200l2.800 3.800h-20.200z" fill="#e3a51c"/>
<path d="M1433 1760h45.500a2.500 2.500 0 0 1 2.500 2.500v33a2.500 2.500 0 0 1-2.500 2.500h-43a2.500 2.500 0 0 1-2.500-2.500z" fill="url(#k_fo)"/>
<path d="M1441 1798v-8a6 6 0 0 1 6-6h20a6 6 0 0 1 6 6v8z" fill="url(#k_fp)"/>
<path d="M1447.500 1790.500h19" stroke="#0c4c92" stroke-width="2" stroke-linecap="round" fill="none"/>
<!-- store -->
<path d="M1531.500 1763v-4.500a5 5 0 0 1 5-5h17a5 5 0 0 1 5 5v4.500" fill="none" stroke="#38b8f2" stroke-width="3.600"/>
<path d="M1522 1762a2.500 2.500 0 0 1 2.500-2.500h41a2.500 2.500 0 0 1 2.500 2.500v28c0 6-4 10-10 10h-26c-6 0-10-4-10-10z" fill="url(#k_sb)"/>
<rect x="1535" y="1769" width="9" height="9" fill="#f25022"/><rect x="1546" y="1769" width="9" height="9" fill="#7fba00"/><rect x="1535" y="1780" width="9" height="9" fill="#00a4ef"/><rect x="1546" y="1780" width="9" height="9" fill="#ffb900"/>
<!-- mail -->
<path d="M1609 1768l22.500-15.200a2.800 2.800 0 0 1 3 0L1657 1768v6h-48z" fill="#0f5cac"/>
<path d="M1613 1768.500h40v14h-40z" fill="#f2f2f2"/>
<path d="M1609 1767.500L1633 1782l24-14.500v27a2.500 2.500 0 0 1-2.500 2.500h-43a2.500 2.500 0 0 1-2.500-2.500z" fill="url(#k_ml)"/>
<path d="M1657 1767.500L1614 1797h40.500a2.500 2.500 0 0 0 2.500-2.500z" fill="url(#k_ml2)"/>
<!-- settings -->
<path d="M1737.5 1770.0L1744.1 1771.3L1744.1 1780.7L1737.5 1782.0L1734.5 1787.3L1736.6 1793.7L1728.5 1798.4L1724.1 1793.3L1717.9 1793.3L1713.5 1798.4L1705.4 1793.7L1707.5 1787.3L1704.5 1782.0L1697.9 1780.7L1697.9 1771.3L1704.5 1770.0L1707.5 1764.7L1705.4 1758.3L1713.5 1753.6L1717.9 1758.7L1724.1 1758.7L1728.5 1753.6L1736.6 1758.3L1734.5 1764.7z" fill="url(#k_gr)" stroke="url(#k_gr)" stroke-width="3" stroke-linejoin="round"/>
<circle cx="1721" cy="1776" r="11.400" fill="#dfe2e6"/>
<circle cx="1721" cy="1776" r="7.700" fill="url(#k_gc)"/>
</svg>

<!-- system tray -->
<div class="abs" style="left:2220px;top:1729px;width:64px;height:95px;background:rgba(255,255,255,.34)"></div>
<svg style="left:2230px;top:1756px" width="290" height="40" viewBox="2230 1756 290 40" fill="none" stroke="#1b1b1b" stroke-width="2.200" stroke-linecap="round" stroke-linejoin="round">
<path d="M2240.200 1781.800l11.800-12 11.800 12"/>
<rect x="2302.500" y="1764" width="43.500" height="26" rx="2"/>
<path d="M2308.500 1770h32M2308.500 1776h32" stroke-dasharray="2.600 3.300" stroke-linecap="butt"/>
<path d="M2308.500 1782.200h4M2316.500 1782.200h16M2336.500 1782.200h4" stroke-linecap="butt"/>
<path d="M2381.200 1771.200a20.300 20.300 0 0 1 29.600 0M2385.800 1775.600a14 14 0 0 1 20.400 0M2390.400 1780a7.800 7.800 0 0 1 11.200 0"/>
<circle cx="2396" cy="1784.300" r="2.300" fill="#1b1b1b" stroke="none"/>
<path d="M2429.200 1771.300h4.800l6.800-5.600v19.600l-6.800-5.600h-4.800z"/>
<path d="M2445 1770.800a6 6 0 0 1 0 9.400M2448.600 1766.200a12 12 0 0 1 0 18.600"/>
<rect x="2477.200" y="1767.200" width="25.400" height="17.200" rx="4.600"/>
<rect x="2481.300" y="1771.300" width="17.200" height="9" rx="2" fill="#1b1b1b" stroke="none"/>
<path d="M2505.400 1773.200v5.200" stroke-width="3.400"/>
</svg>
<span class="t" id="y_time" style="--x:2568;--b:1768.800;--s:22.600;--w:81">8:13 PM</span>
<span class="t" id="y_date" style="--x:2544;--b:1801;--s:22.600;--w:106">6/24/2021</span>
<div class="abs" style="left:2664px;top:1760px;width:32px;height:32px;border-radius:50%;background:#0a78d4"></div>
<span class="t" id="y_badge" style="--x:2674.800;--b:1782.500;--s:18;color:#fff;font-weight:bold">1</span>
<div class="abs" style="left:2243.500px;top:1787.200px;width:214.500px;height:35px;border-radius:5px;background:#fbfbfa;border:1px solid #d9dadc;box-shadow:1px 3px 7px rgba(0,0,0,.28)"></div>
<span class="t" id="y_tip" style="--x:2250;--b:1812.800;--s:22.400;--w:200.500;color:#575757">Show hidden icons</span>

</body>
</html>
